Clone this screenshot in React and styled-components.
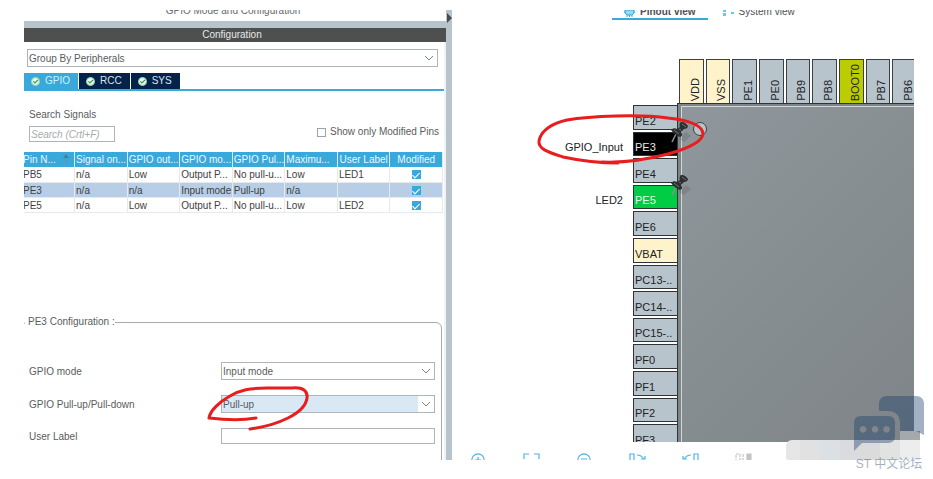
import React, { useState } from "react";
import styled, { createGlobalStyle } from "styled-components";

const columns = [
  "Pin N...",
  "Signal on...",
  "GPIO out...",
  "GPIO mo...",
  "GPIO Pul...",
  "Maximu...",
  "User Label",
  "Modified",
];

const signals = [
  ["PB5", "n/a", "Low", "Output P...", "No pull-u...", "Low", "LED1"],
  ["PE3", "n/a", "n/a", "Input mode", "Pull-up", "n/a", ""],
  ["PE5", "n/a", "Low", "Output P...", "No pull-u...", "Low", "LED2"],
];

const topPins = [
  { name: "VDD", color: "#fff3cc" },
  { name: "VSS", color: "#fff3cc" },
  { name: "PE1" },
  { name: "PE0" },
  { name: "PB9" },
  { name: "PB8" },
  { name: "BOOT0", color: "#bbcc00" },
  { name: "PB7" },
  { name: "PB6" },
];

const leftPins = [
  { name: "PE2" },
  { name: "PE3", color: "#000000", text: "#e8e8e8", label: "GPIO_Input" },
  { name: "PE4" },
  { name: "PE5", color: "#00cc44", text: "#e4ffe9", label: "LED2" },
  { name: "PE6" },
  { name: "VBAT", color: "#fff3cc" },
  { name: "PC13-.." },
  { name: "PC14-.." },
  { name: "PC15-.." },
  { name: "PF0" },
  { name: "PF1" },
  { name: "PF2" },
  { name: "PF3" },
];

const CheckCircle = () => (
  <svg width="9" height="9" viewBox="0 0 9 9" aria-hidden="true">
    <circle cx="4.5" cy="4.5" r="4.3" fill="#f1faee" />
    <circle cx="4.5" cy="4.5" r="3.9" fill="none" stroke="#7cc795" strokeWidth="0.8" />
    <path d="M2.4 4.4 L4 6 L7 2.9" fill="none" stroke="#2f9a55" strokeWidth="1.2" />
  </svg>
);

const Pushpin = () => (
  <svg width="30" height="24" viewBox="0 0 30 24" aria-hidden="true">
    <path d="M8 17 L15 10 L20 14 L13 20 Z" fill="#555" opacity="0.25" />
    <path d="M5 12 L1 20" stroke="#8b8f92" strokeWidth="1.6" />
    <path d="M0 8 C2 6 4 6 6 7 L9 5 C8 3 9 1 10 0 C12 -0.5 15 1 17 4 C17 6 15 7 13 7 L10 10 C12 12 11 15 9 15 C6 14 2 11 0 8 Z" fill="#2d3033" />
    <path d="M3 8 L8 12 M8 7 L10 8 M11 2 L15 5" stroke="#6d7276" strokeWidth="1" fill="none" />
  </svg>
);

const tools = [
  {
    name: "Zoom in",
    art: (
      <>
        <circle cx="8" cy="7" r="6.2" />
        <path d="M8 4 V10 M5 7 H11 M12.5 11.5 L16 15" />
      </>
    ),
  },
  { name: "Best fit", art: <path d="M1 6 V1 H6 M11 1 H16 V6 M16 10 V15 H11 M6 15 H1 V10" /> },
  {
    name: "Zoom out",
    art: (
      <>
        <circle cx="8" cy="7" r="6.2" />
        <path d="M5 6 H11 M12.5 11.5 L16 15" />
      </>
    ),
  },
  { name: "Rotate right", art: <path d="M1 1 H5 V15 H1 Z M8 2 C11 2 13 3 15 6 M16 3 V6 H12" /> },
  { name: "Rotate left", art: <path d="M12 1 H16 V15 H12 Z M9 2 C6 2 4 3 2 6 M1 3 V6 H5" /> },
  {
    name: "Split view",
    muted: true,
    art: (
      <>
        <path d="M1 1 H5 V15 H1 Z M8 1 V15" strokeDasharray="3 1" />
        <path d="M12 1 H16 V15 H12 Z" fill="currentColor" />
      </>
    ),
  },
];

const Dropdown = ({ id, label, options, active }) => (
  <SelectBox>
    <Select id={id} aria-label={label} $active={active}>
      {options.map((option) => (
        <option key={option}>{option}</option>
      ))}
    </Select>
    <Arrow>
      <svg width="10" height="6" viewBox="0 0 10 6" aria-hidden="true">
        <path d="M1 1 L5 5 L9 1" fill="none" stroke="#7d8489" />
      </svg>
    </Arrow>
  </SelectBox>
);

const Configuration = () => {
  const [onlyModified, setOnlyModified] = useState(false);
  return (
    <ConfigPanel>
      <PanelTitle>GPIO Mode and Configuration</PanelTitle>
      <PanelHeader>Configuration</PanelHeader>
      <ConfigBody>
        <Inset>
          <Dropdown label="Grouping" options={["Group By Peripherals", "Group By IP"]} />
        </Inset>
        <Tabs>
          {["GPIO", "RCC", "SYS"].map((tab) => (
            <Tab key={tab} type="button" $active={tab === "GPIO"}>
              <CheckCircle />
              {tab}
            </Tab>
          ))}
        </Tabs>
        <SearchRow>
          <SearchField>
            <label htmlFor="search">Search Signals</label>
            <SearchInput id="search" placeholder="Search (Crtl+F)" />
          </SearchField>
          <ModifiedLabel>
            <Checkbox
              type="checkbox"
              checked={onlyModified}
              onChange={(e) => setOnlyModified(e.target.checked)}
            />
            Show only Modified Pins
          </ModifiedLabel>
        </SearchRow>
        <TableArea>
          <Table>
            <thead>
              <tr>
                {columns.map((column, i) => (
                  <HeadCell key={column} $center={i > 5}>
                    {column}
                    {i === 0 && (
                      <SortIcon width="6" height="9" viewBox="0 0 6 9" aria-hidden="true">
                        <path d="M0 4 L3 0 L6 4 Z" fill="#56788c" />
                        <path d="M0 5 L3 9 L6 5 Z" fill="#5c98b8" />
                      </SortIcon>
                    )}
                  </HeadCell>
                ))}
              </tr>
            </thead>
            <tbody>
              {signals.map((row) => (
                <Row key={row[0]} $selected={row[0] === "PE3"}>
                  {row.map((value, i) => (
                    <Cell key={i}>{value}</Cell>
                  ))}
                  <Cell $center>
                    <Checkbox type="checkbox" defaultChecked aria-label={`${row[0]} modified`} />
                  </Cell>
                </Row>
              ))}
            </tbody>
          </Table>
        </TableArea>
        <PinFieldset>
          <legend>PE3 Configuration :</legend>
          <FormRow>
            <label htmlFor="mode">GPIO mode</label>
            <Dropdown id="mode" options={["Input mode"]} />
          </FormRow>
          <FormRow>
            <label htmlFor="pull">GPIO Pull-up/Pull-down</label>
            <Dropdown id="pull" options={["Pull-up", "Pull-down", "No pull-up and no pull-down"]} active />
          </FormRow>
          <FormRow>
            <label htmlFor="userLabel">User Label</label>
            <TextInput id="userLabel" />
          </FormRow>
        </PinFieldset>
      </ConfigBody>
    </ConfigPanel>
  );
};

const Pinout = () => (
  <PinoutPanel>
    <ViewTabs>
      <ViewTab type="button" $active>
        <svg width="11" height="10" viewBox="0 0 11 10" aria-hidden="true">
          <path d="M1 3 H10 V6 L8 8 H3 L1 6 Z M0 5 H2 M9 5 H11 M3 8 V10 M5.5 8 V10 M8 8 V10" fill="#9ed6f0" stroke="#39a9dc" />
        </svg>
        Pinout view
      </ViewTab>
      <ViewTab type="button">
        <svg width="11" height="10" viewBox="0 0 11 10" aria-hidden="true">
          <path d="M0 2 H3 V5 H0 Z M0 6 H3 V9 H0 Z M8 5 H11 V7 H8 Z" fill="#74c3e8" />
        </svg>
        System view
      </ViewTab>
    </ViewTabs>
    <Canvas>
      <Package>
        <TopPins>
          {topPins.map((pin) => (
            <TopPin key={pin.name} $color={pin.color}>
              <span>{pin.name}</span>
            </TopPin>
          ))}
        </TopPins>
        <LeftPins>
          {leftPins.map((pin) => (
            <PinLine key={pin.name}>
              <PinLabel>{pin.label}</PinLabel>
              <Pin $color={pin.color} $text={pin.text}>
                {pin.name}
                {pin.label && (
                  <PinMark>
                    <Pushpin />
                  </PinMark>
                )}
              </Pin>
            </PinLine>
          ))}
        </LeftPins>
        <Chip>
          <ChipFace>
            <PinOneDot />
          </ChipFace>
        </Chip>
      </Package>
    </Canvas>
    <Toolbar>
      {tools.map((tool) => (
        <ToolButton key={tool.name} type="button" aria-label={tool.name} $muted={tool.muted}>
          <svg width="17" height="16" viewBox="0 0 17 16" fill="none" stroke="currentColor" strokeWidth="1.2" aria-hidden="true">
            {tool.art}
          </svg>
        </ToolButton>
      ))}
    </Toolbar>
  </PinoutPanel>
);

const App = () => {
  return (
    <>
      <GlobalStyle />
      <Page>
        <Workspace>
          <Configuration />
          <Divider>
            <svg width="6" height="12" viewBox="0 0 6 12" aria-hidden="true">
              <path d="M1 1 L6 6 L1 11 Z" fill="#4a4d4f" />
            </svg>
          </Divider>
          <Pinout />
        </Workspace>
        <Marks width="933" height="479" viewBox="0 0 933 479" aria-hidden="true">
          <path d="M618 163 C600 163 577 160 563 157 C548 152 538 149 539 141 C541 130 553 123 567 120 C590 116 640 114 668 118 C690 120 703 126 703 134 C702 142 686 149 668 154 C645 160 625 163 602 162" />
          <path d="M256 418 C240 421 225 420 209 418 C210 411 219 402 230 396 C240 390 250 388 267 388 L292 388 C303 387 308 391 307 398 C306 406 298 413 288 418 C278 423 265 427 250 429" />
        </Marks>
        <Mosaic />
        <Watermark>
          <svg width="72" height="57" viewBox="0 0 72 57" aria-hidden="true">
            <path
              d="M26 15 V8 C26 3 29 0 34 0 H63 C68 0 71 3 71 8 V39 L63 35 H47 V27 C47 19 42 15 35 15 Z"
              fill="#1a3e6c"
            />
            <path
              d="M8 20 H35 C40 20 42 23 42 27 V40 C42 44 40 47 35 47 H9 L1 55 V27 C1 23 3 20 8 20 Z M10 30 A3.4 3.4 0 1 0 10.1 30 Z M22 30 A3.4 3.4 0 1 0 22.1 30 Z M33.5 30 A3.4 3.4 0 1 0 33.6 30 Z"
              fill="#1a3e6c"
              fillRule="evenodd"
            />
          </svg>
          <span>ST 中文论坛</span>
        </Watermark>
      </Page>
    </>
  );
};

export default App;

const GlobalStyle = createGlobalStyle`
  * {
    box-sizing: border-box;
  }
  body {
    margin: 0;
    background: #fff;
    color: #5a5c5e;
    font-family: "Liberation Sans", Arial, "Noto Sans CJK SC", sans-serif;
    font-size: 10px;
    line-height: 12px;
  }
  button,
  input,
  select {
    margin: 0;
    color: inherit;
    font: inherit;
  }
`;

const Page = styled.div`
  position: relative;
  height: 100vh;
  padding: 10px 19px 19px 24px;
  overflow: hidden;
`;

const Workspace = styled.main`
  display: grid;
  grid-template-columns: minmax(0, 422fr) 6px minmax(0, 462fr);
  height: 100%;
  overflow: hidden;
`;

const ConfigPanel = styled.section`
  display: flex;
  flex-direction: column;
  overflow: hidden;
`;

const PanelTitle = styled.div`
  display: flex;
  flex: none;
  align-items: flex-end;
  justify-content: center;
  height: 11px;
  padding: 0 4px 4px 0;
  overflow: hidden;
  color: #66696b;
`;

const PanelHeader = styled.div`
  flex: none;
  padding: 1px 6px 1px 0;
  border-top: 7px solid #b8c4cb;
  background: #4d504f;
  color: #e8e8e8;
  text-align: center;
`;

const ConfigBody = styled.div`
  display: flex;
  flex: 1;
  flex-direction: column;
  padding-top: 7px;
  border-right: 2px solid #f0f3f5;
`;

const Inset = styled.div`
  padding: 0 6px 0 3px;
`;

const SelectBox = styled.div`
  position: relative;
`;

const Select = styled.select`
  display: block;
  width: 100%;
  height: 18px;
  padding: 1px 16px 0 1px;
  border: 1px solid #adb5ba;
  border-radius: 0;
  background: ${(props) => (props.$active ? "#d9e8f5" : "#fff")};
  appearance: none;
`;

const Arrow = styled.span`
  position: absolute;
  top: 1px;
  right: 1px;
  bottom: 1px;
  display: flex;
  align-items: center;
  justify-content: center;
  width: 16px;
  background: #fff;
  pointer-events: none;
`;

const Tabs = styled.div`
  display: flex;
  gap: 1px;
  margin-top: 6px;
  border-bottom: 2px solid #39a9dc;
`;

const Tab = styled.button`
  display: flex;
  align-items: center;
  gap: 5px;
  height: 16px;
  padding: 0 8px 0 7px;
  border: 0;
  background: ${(props) => (props.$active ? "#39a9dc" : "#03234b")};
  color: ${(props) => (props.$active ? "#d5eefa" : "#dce2ea")};
`;

const SearchRow = styled.div`
  display: flex;
  align-items: flex-end;
  justify-content: space-between;
  margin-top: 18px;
  padding: 0 5px;
`;

const SearchField = styled.div`
  display: flex;
  flex-direction: column;
  gap: 5px;
`;

const TextInput = styled.input`
  width: 100%;
  height: 16px;
  padding: 0 1px;
  border: 1px solid #adb5ba;
`;

const SearchInput = styled(TextInput)`
  width: 86px;
  &::placeholder {
    color: #a8aaac;
    font-style: italic;
  }
`;

const ModifiedLabel = styled.label`
  display: flex;
  align-items: center;
  gap: 4px;
  padding-bottom: 4px;
`;

const Checkbox = styled.input`
  width: 9px;
  height: 9px;
  border: 1px solid #9ba4aa;
  background: #fff;
  appearance: none;
  &:checked {
    display: inline-grid;
    place-items: center;
    border-color: #39a9dc;
    background: #39a9dc;
  }
  &:checked::before {
    content: "";
    width: 3px;
    height: 6px;
    margin-bottom: 2px;
    border: solid #fff;
    border-width: 0 1px 1px 0;
    transform: rotate(45deg);
  }
`;

const TableArea = styled.div`
  min-height: 164px;
  margin: 10px 1px 0 -2px;
`;

const Table = styled.table`
  width: 100%;
  border-collapse: collapse;
  table-layout: fixed;
`;

const HeadCell = styled.th`
  height: 15px;
  padding: 0 1px;
  border-right: 1px solid #d4edf8;
  background: #39a9dc;
  color: #eaf7fd;
  font-weight: normal;
  line-height: 14px;
  text-align: ${(props) => (props.$center ? "center" : "left")};
  white-space: nowrap;
`;

const SortIcon = styled.svg`
  margin-left: 7px;
`;

const Row = styled.tr`
  background: ${(props) => (props.$selected ? "#b8cee6" : "#fff")};
`;

const Cell = styled.td`
  height: 15px;
  padding: 1px 1px 0;
  border: solid #e6eaed;
  border-width: 0 1px 1px 0;
  color: #3f4143;
  line-height: 13px;
  text-align: ${(props) => (props.$center ? "center" : "left")};
  white-space: nowrap;
`;

const PinFieldset = styled.fieldset`
  display: flex;
  flex: 1 0 auto;
  flex-direction: column;
  gap: 15px;
  min-width: 0;
  margin: 0 2px -10px -3px;
  padding: 34px 6px 30px 7px;
  border: 1px solid #a5abaf;
  border-radius: 6px;
  legend {
    margin-left: -4px;
    padding: 0 0 0 3px;
  }
`;

const FormRow = styled.div`
  display: grid;
  grid-template-columns: 192px minmax(0, 1fr);
  align-items: center;
  label {
    padding-top: 1px;
  }
`;

const Divider = styled.div`
  padding-top: 2px;
  background: #b8c4cb;
`;

const PinoutPanel = styled.section`
  display: flex;
  flex-direction: column;
  overflow: hidden;
`;

const ViewTabs = styled.div`
  display: flex;
  flex: none;
  align-items: flex-end;
  gap: 3px;
  height: 10px;
  padding-left: 160px;
  overflow: hidden;
`;

const ViewTab = styled.button`
  display: flex;
  align-items: center;
  gap: 5px;
  padding: 0 12px;
  border: 0;
  border-bottom: 2px solid ${(props) => (props.$active ? "#39a9dc" : "transparent")};
  background: none;
  color: #505254;
  font-weight: ${(props) => (props.$active ? "bold" : "normal")};
  white-space: nowrap;
`;

const Canvas = styled.div`
  flex: 1;
  min-height: 0;
  padding-top: 39px;
  overflow: hidden;
`;

const Package = styled.div`
  display: grid;
  grid-template-columns: 225px minmax(0, 1fr);
  grid-template-rows: 44px auto;
  font-size: 11px;
`;

const TopPins = styled.div`
  display: flex;
  grid-column: 2;
  gap: 2px;
  width: 240px;
  padding-left: 2px;
`;

const TopPin = styled.div`
  display: flex;
  flex: 1;
  align-items: flex-end;
  justify-content: flex-end;
  padding: 0 2px 2px;
  border: 1px solid #3b4043;
  border-bottom: 0;
  background: ${(props) => props.$color || "#b8c4cb"};
  color: #202325;
  span {
    writing-mode: vertical-rl;
    transform: rotate(180deg);
  }
`;

const LeftPins = styled.div`
  display: flex;
  flex-direction: column;
  gap: 2px;
  height: 346px;
  padding-top: 2px;
`;

const PinLine = styled.div`
  display: grid;
  flex: 1;
  grid-template-columns: minmax(0, 1fr) 44px;
  gap: 10px;
`;

const PinLabel = styled.span`
  align-self: end;
  padding-bottom: 3px;
  color: #202325;
  text-align: right;
`;

const Pin = styled.div`
  position: relative;
  display: flex;
  align-items: flex-end;
  padding: 0 1px 2px;
  border: 1px solid #2f3437;
  border-right: 0;
  background: ${(props) => props.$color || "#b8c4cb"};
  color: ${(props) => props.$text || "#202325"};
`;

const PinMark = styled.span`
  position: absolute;
  right: -24px;
  bottom: 9px;
  z-index: 1;
  height: 24px;
`;

const Chip = styled.div`
  padding: 2px 0 0 3px;
  border: solid #2f3437;
  border-width: 1px 0 0 1px;
  background: #7e8589;
`;

const ChipFace = styled.div`
  height: 100%;
  padding: 15px 0 0 11px;
  border: solid #d3d7da;
  border-width: 1px 0 0 1px;
  background: linear-gradient(135deg, #8f979c, #7e8487);
`;

const PinOneDot = styled.div`
  width: 14px;
  height: 14px;
  border: 1px solid #3b4043;
  border-radius: 50%;
  background: #b8c4cb;
`;

const Toolbar = styled.div`
  display: flex;
  flex: none;
  gap: 36px;
  height: 18px;
  padding: 11px 0 0 18px;
  overflow: hidden;
`;

const ToolButton = styled.button`
  flex: none;
  width: 17px;
  height: 16px;
  padding: 0;
  border: 0;
  background: none;
  color: ${(props) => (props.$muted ? "#c4c4c4" : "#4db4e2")};
`;

const Marks = styled.svg`
  position: absolute;
  top: 0;
  left: 0;
  z-index: 2;
  pointer-events: none;
  path {
    fill: none;
    stroke: #e81e1e;
    stroke-width: 3;
    stroke-linecap: round;
    stroke-linejoin: round;
  }
`;

const Mosaic = styled.div`
  position: absolute;
  right: 13px;
  bottom: 19px;
  width: 134px;
  height: 20px;
  border-radius: 6px 0 0 2px;
  background: linear-gradient(
    90deg,
    #e6e6e6 14px,
    #e1e1e1 14px 34px,
    #dae0e4 34px 54px,
    #d9dbde 54px 74px,
    #dbdbdb 74px 94px,
    #e1e3e2 94px 114px,
    #eceeed 114px
  );
  &::before {
    content: "";
    position: absolute;
    right: 0;
    bottom: 100%;
    width: 20px;
    height: 9px;
    background: #a6a9ab;
  }
`;

const Watermark = styled.div`
  position: absolute;
  right: 8px;
  bottom: 8px;
  display: flex;
  flex-direction: column;
  align-items: center;
  gap: 4px;
  color: #1a3e6c;
  font-size: 12px;
  line-height: 14px;
  opacity: 0.4;
`;
